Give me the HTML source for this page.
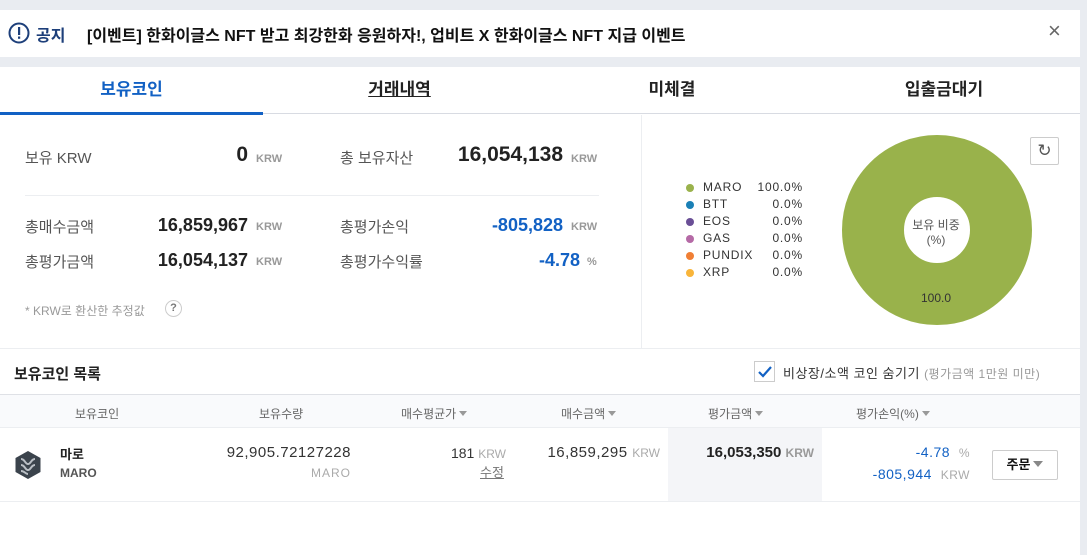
<!DOCTYPE html>
<html><head><meta charset="utf-8"><style>
*{margin:0;padding:0;box-sizing:border-box}
body{width:1087px;height:555px;background:#e9ecf1;font-family:"Liberation Sans","Noto Sans CJK KR",sans-serif;position:relative;overflow:hidden;color:#333}
.abs{position:absolute}
.notice{left:0;top:10px;width:1080px;height:47px;background:#fff}
.main{left:0;top:67px;width:1080px;height:488px;background:#fff}
.tab{top:0;height:48px;line-height:46px;text-align:center;font-size:17px;font-weight:bold;color:#222}
.lbl{font-size:15px;color:#555}
.num{font-size:18px;font-weight:bold;color:#222;text-align:right}
.unit{font-size:11px;font-weight:bold;color:#999}
.lg{position:absolute;font-size:12px;color:#333;letter-spacing:.8px;height:17px;line-height:17px}
.dot{position:absolute;width:8px;height:8px;border-radius:50%}
.th{font-size:12px;color:#666;top:10px}
.tri{display:inline-block;border:4px solid transparent;border-top:5px solid #999;border-bottom:0;margin-left:3px;vertical-align:2px}
</style></head><body>
<div class="abs notice">
  <svg class="abs" style="left:8px;top:12px" width="22" height="22" viewBox="0 0 22 22"><circle cx="11" cy="11" r="9.5" fill="none" stroke="#1d3f7a" stroke-width="2"/><rect x="10" y="5" width="2.2" height="8" fill="#1d3f7a"/><rect x="10" y="14.5" width="2.2" height="2.3" fill="#1d3f7a"/></svg>
  <div class="abs" style="left:36px;top:12px;font-size:16px;font-weight:bold;color:#1d3f7a">공지</div>
  <div class="abs" style="left:87px;top:12px;font-size:16px;font-weight:bold;color:#111">[이벤트] 한화이글스 NFT 받고 최강한화 응원하자!, 업비트 X 한화이글스 NFT 지급 이벤트</div>
  <div class="abs" style="left:1048px;top:8px;font-size:22px;color:#666">×</div>
</div>
<div class="abs main">
  <div class="abs tab" style="left:0;width:263px;color:#1261c4">보유코인</div>
  <div class="abs tab" style="left:263px;width:273px;text-decoration:underline">거래내역</div>
  <div class="abs tab" style="left:536px;width:272px">미체결</div>
  <div class="abs tab" style="left:808px;width:272px">입출금대기</div>
  <div class="abs" style="left:0;top:46px;width:1080px;height:1px;background:#d8dbe2"></div>
  <div class="abs" style="left:0;top:45px;width:263px;height:3px;background:#1261c4"></div>

  <div class="abs" style="left:641px;top:48px;width:1px;height:233px;background:#eceef1"></div>
  <div class="abs lbl" style="left:25px;top:80px">보유 KRW</div>
  <div class="abs num" style="left:180px;top:76px;width:68px;font-size:21px">0</div>
  <div class="abs unit" style="left:256px;top:86px">KRW</div>
  <div class="abs lbl" style="left:340px;top:80px">총 보유자산</div>
  <div class="abs num" style="left:430px;top:76px;width:133px;font-size:21px">16,054,138</div>
  <div class="abs unit" style="left:571px;top:86px">KRW</div>
  <div class="abs" style="left:25px;top:128px;width:574px;height:1px;background:#eceef1"></div>
  <div class="abs lbl" style="left:25px;top:149px">총매수금액</div>
  <div class="abs num" style="left:140px;top:148px;width:108px">16,859,967</div>
  <div class="abs unit" style="left:256px;top:154px">KRW</div>
  <div class="abs lbl" style="left:340px;top:149px">총평가손익</div>
  <div class="abs num" style="left:450px;top:148px;width:113px;color:#1261c4">-805,828</div>
  <div class="abs unit" style="left:571px;top:154px">KRW</div>
  <div class="abs lbl" style="left:25px;top:184px">총평가금액</div>
  <div class="abs num" style="left:140px;top:183px;width:108px">16,054,137</div>
  <div class="abs unit" style="left:256px;top:189px">KRW</div>
  <div class="abs lbl" style="left:340px;top:184px">총평가수익률</div>
  <div class="abs num" style="left:450px;top:183px;width:130px;color:#1261c4">-4.78</div>
  <div class="abs unit" style="left:587px;top:189px">%</div>
  <div class="abs" style="left:25px;top:235px;font-size:12px;color:#999">* KRW로 환산한 추정값</div>
  <div class="abs" style="left:165px;top:233px;width:17px;height:17px;border:1px solid #ccc;border-radius:50%;font-size:11px;font-weight:bold;color:#777;text-align:center;line-height:15px">?</div>

  <div class="abs" style="left:686px;top:112px;width:120px;height:110px">
    <span class="dot" style="left:0;top:5px;background:#9ab24c"></span><span class="lg" style="left:17px;top:0">MARO</span><span class="lg" style="right:3px;top:0">100.0%</span>
    <span class="dot" style="left:0;top:22px;background:#1a80b6"></span><span class="lg" style="left:17px;top:17px">BTT</span><span class="lg" style="right:3px;top:17px">0.0%</span>
    <span class="dot" style="left:0;top:39px;background:#6a4f96"></span><span class="lg" style="left:17px;top:34px">EOS</span><span class="lg" style="right:3px;top:34px">0.0%</span>
    <span class="dot" style="left:0;top:56px;background:#b56aa6"></span><span class="lg" style="left:17px;top:51px">GAS</span><span class="lg" style="right:3px;top:51px">0.0%</span>
    <span class="dot" style="left:0;top:73px;background:#f07f35"></span><span class="lg" style="left:17px;top:68px">PUNDIX</span><span class="lg" style="right:3px;top:68px">0.0%</span>
    <span class="dot" style="left:0;top:90px;background:#f9b53a"></span><span class="lg" style="left:17px;top:85px">XRP</span><span class="lg" style="right:3px;top:85px">0.0%</span>
  </div>
  <svg class="abs" style="left:840px;top:66px" width="194" height="194"><circle cx="97" cy="97" r="64" fill="none" stroke="#99b24b" stroke-width="62"/></svg>
  <div class="abs" style="left:896px;top:151px;width:80px;text-align:center;font-size:12px;color:#555;line-height:15px">보유 비중<br>(%)</div>
  <div class="abs" style="left:906px;top:224px;width:60px;text-align:center;font-size:12px;color:#333">100.0</div>
  <div class="abs" style="left:1030px;top:70px;width:29px;height:28px;border:1px solid #ccc;border-radius:2px;text-align:center;line-height:26px;font-size:17px;color:#555">↻</div>

  <div class="abs" style="left:0;top:281px;width:1080px;height:1px;background:#eceef1"></div>
  <div class="abs" style="left:14px;top:296px;font-size:15px;font-weight:bold;color:#222">보유코인 목록</div>
  <div class="abs" style="left:754px;top:294px;width:21px;height:21px;border:1px solid #ccc;background:#fff"><svg width="19" height="19"><path d="M4 10l4 4 8-9" fill="none" stroke="#1261c4" stroke-width="2.2"/></svg></div>
  <div class="abs" style="left:783px;top:296px;font-size:13px;color:#333;letter-spacing:.5px">비상장/소액 코인 숨기기 <span style="color:#999;font-size:12px">(평가금액 1만원 미만)</span></div>

  <div class="abs" style="left:0;top:327px;width:1080px;height:34px;background:#f9fafc;border-top:1px solid #dfe1e6;border-bottom:1px solid #eceef1">
    <div class="abs th" style="left:75px">보유코인</div>
    <div class="abs th" style="left:259px">보유수량</div>
    <div class="abs th" style="left:401px">매수평균가<span class="tri"></span></div>
    <div class="abs th" style="left:561px">매수금액<span class="tri"></span></div>
    <div class="abs th" style="left:708px">평가금액<span class="tri"></span></div>
    <div class="abs th" style="left:856px">평가손익(%)<span class="tri"></span></div>
  </div>
  <div class="abs" style="left:668px;top:361px;width:154px;height:74px;background:#f4f5f8"></div>
  <div class="abs" style="left:0;top:434px;width:1080px;height:1px;background:#eceef1"></div>
  <svg class="abs" style="left:14px;top:383px" width="28" height="30" viewBox="0 0 28 30"><path d="M14 1L26.5 8v14L14 29 1.5 22V8z" fill="#3b434c"/><path d="M7 9c4 0 4 5 7 5s3-5 7-5M7 15c4 0 4 5 7 5s3-5 7-5M7 21c4 0 4 3 7 3" fill="none" stroke="#b9bec4" stroke-width="2"/></svg>
  <div class="abs" style="left:60px;top:377px;font-size:13px;font-weight:bold;color:#222">마로</div>
  <div class="abs" style="left:60px;top:399px;font-size:12px;font-weight:bold;color:#555">MARO</div>
  <div class="abs" style="left:200px;top:377px;width:151px;text-align:right;font-size:15px;color:#333;letter-spacing:.5px">92,905.72127228</div>
  <div class="abs" style="left:250px;top:399px;width:101px;text-align:right;font-size:12px;color:#aaa;letter-spacing:1px">MARO</div>
  <div class="abs" style="left:400px;top:378px;width:106px;text-align:right;font-size:14px;color:#333"><span>181</span> <span style="font-size:12px;color:#aaa">KRW</span></div>
  <div class="abs" style="left:480px;top:395px;font-size:13px;color:#777;text-decoration:underline">수정</div>
  <div class="abs" style="left:540px;top:377px;width:120px;text-align:right;font-size:15px;color:#333;letter-spacing:.5px">16,859,295 <span style="font-size:12px;color:#aaa;letter-spacing:0">KRW</span></div>
  <div class="abs" style="left:690px;top:377px;width:124px;text-align:right;font-size:15px;font-weight:bold;color:#222">16,053,350 <span style="font-size:12px;color:#999">KRW</span></div>
  <div class="abs" style="left:850px;top:377px;width:120px;text-align:right;font-size:14px;color:#1261c4;letter-spacing:.5px">-4.78 &nbsp;<span style="font-size:12px;color:#aaa">%</span></div>
  <div class="abs" style="left:840px;top:399px;width:130px;text-align:right;font-size:14px;color:#1261c4;letter-spacing:.5px">-805,944 &nbsp;<span style="font-size:12px;color:#aaa">KRW</span></div>
  <div class="abs" style="left:992px;top:383px;width:66px;height:30px;border:1px solid #ccc;border-radius:2px;text-align:center;line-height:28px;font-size:13px;font-weight:bold;color:#111">주문<span class="tri" style="border-top-color:#888;border-width:5px 5px 0;border-top-width:6px"></span></div>
</div>
</body></html>
